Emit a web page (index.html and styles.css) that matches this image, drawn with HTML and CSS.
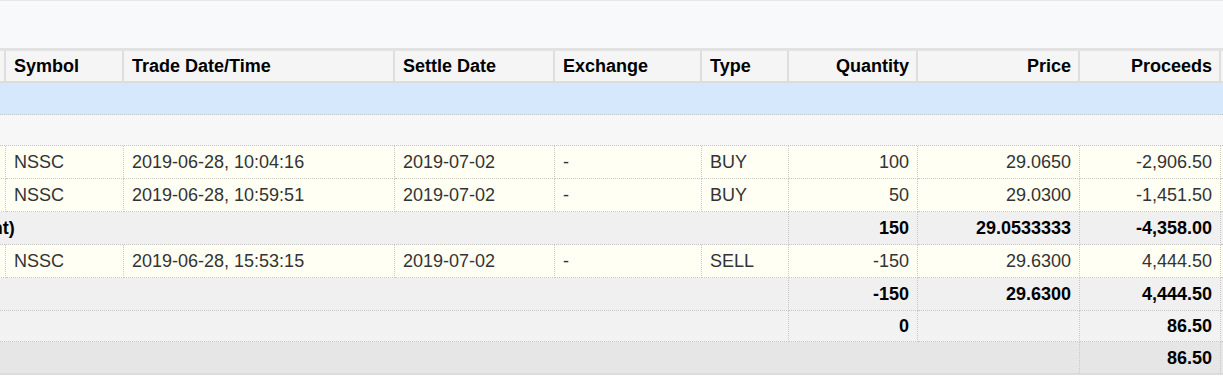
FILE: index.html
```html
<!DOCTYPE html>
<html lang="en">
<head>
<meta charset="utf-8">
<title>Trades</title>
<link rel="stylesheet" href="styles.css">
</head>
<body>
<div class="toolbar"></div>
<div class="scroller">
  <table class="trades">
    <colgroup>
      <col class="c-acct">
      <col class="c-symbol">
      <col class="c-date">
      <col class="c-settle">
      <col class="c-exch">
      <col class="c-type">
      <col class="c-qty">
      <col class="c-price">
      <col class="c-proc">
      <col class="c-extra">
    </colgroup>
    <thead>
      <tr class="head">
        <th></th>
        <th>Symbol</th>
        <th>Trade Date/Time</th>
        <th>Settle Date</th>
        <th>Exchange</th>
        <th>Type</th>
        <th class="num">Quantity</th>
        <th class="num">Price</th>
        <th class="num">Proceeds</th>
        <th></th>
      </tr>
    </thead>
    <tbody>
      <tr class="cat"><td colspan="10"></td></tr>
      <tr class="cur"><td colspan="10"></td></tr>
      <tr class="row">
        <td></td>
        <td>NSSC</td>
        <td>2019-06-28, 10:04:16</td>
        <td>2019-07-02</td>
        <td>-</td>
        <td>BUY</td>
        <td class="num">100</td>
        <td class="num">29.0650</td>
        <td class="num">-2,906.50</td>
        <td></td>
      </tr>
      <tr class="row">
        <td></td>
        <td>NSSC</td>
        <td>2019-06-28, 10:59:51</td>
        <td>2019-07-02</td>
        <td>-</td>
        <td>BUY</td>
        <td class="num">50</td>
        <td class="num">29.0300</td>
        <td class="num">-1,451.50</td>
        <td></td>
      </tr>
      <tr class="sub">
        <td colspan="6" class="label">Total (Amount)</td>
        <td class="num">150</td>
        <td class="num">29.0533333</td>
        <td class="num">-4,358.00</td>
        <td></td>
      </tr>
      <tr class="row">
        <td></td>
        <td>NSSC</td>
        <td>2019-06-28, 15:53:15</td>
        <td>2019-07-02</td>
        <td>-</td>
        <td>SELL</td>
        <td class="num">-150</td>
        <td class="num">29.6300</td>
        <td class="num">4,444.50</td>
        <td></td>
      </tr>
      <tr class="sub">
        <td colspan="6" class="label"></td>
        <td class="num">-150</td>
        <td class="num">29.6300</td>
        <td class="num">4,444.50</td>
        <td></td>
      </tr>
      <tr class="total">
        <td colspan="6" class="label"></td>
        <td class="num">0</td>
        <td class="num"></td>
        <td class="num">86.50</td>
        <td></td>
      </tr>
      <tr class="grand">
        <td colspan="8" class="label"></td>
        <td class="num">86.50</td>
        <td></td>
      </tr>
    </tbody>
  </table>
</div>
</body>
</html>
```

FILE: styles.css
```css
html, body {
  margin: 0;
  padding: 0;
  background: #ffffff;
}

body {
  font-family: "Liberation Sans", Arial, sans-serif;
}

.toolbar {
  height: 47px;
  background: #f8f9fa;
  border-top: 1px solid #e6e7e8;
}

.scroller {
  overflow: hidden;
  border-top: 3px solid #e2e2e2;
  border-bottom: 2px solid #dcdcdc;
}

.trades {
  border-collapse: separate;
  border-spacing: 0;
  table-layout: fixed;
  width: 1493px;
  margin-left: -122px;
  font-size: 18px;
  color: #333333;
}

.c-acct { width: 128px; }
.c-symbol { width: 118px; }
.c-date { width: 271px; }
.c-settle { width: 160px; }
.c-exch { width: 147px; }
.c-type { width: 87px; }
.c-qty { width: 129px; }
.c-price { width: 162px; }
.c-proc { width: 141px; }
.c-extra { width: 150px; }

.trades th,
.trades td {
  box-sizing: border-box;
  padding: 1px 8px 0;
  text-align: left;
  vertical-align: middle;
  white-space: nowrap;
  overflow: hidden;
}

.trades .num {
  text-align: right;
}

.head th {
  height: 32px;
  padding-top: 0;
  background: #f5f5f5;
  color: #000000;
  font-weight: bold;
  border-right: 2px solid #dedede;
  border-bottom: 2px solid #dcdcdc;
}

.head th.num {
  padding-right: 7px;
}

.cat td {
  height: 32px;
  background: #d6e8fb;
  border-bottom: 1px dotted #c4c4c4;
}

.cur td {
  height: 31px;
  background: #f7f7f7;
  border-bottom: 1px dotted #c4c4c4;
}

.row td {
  height: 33px;
  background: #fffff3;
  border-right: 1px dotted #c8c8c8;
  border-bottom: 1px dotted #c8c8c8;
}

.sub td,
.total td,
.grand td {
  color: #000000;
  font-weight: bold;
  border-right: 1px dotted #c8c8c8;
}

.sub td {
  height: 33px;
  background: #f0f0f0;
  border-bottom: 1px dotted #c8c8c8;
}

.total td {
  height: 31px;
  background: #f2f2f2;
  border-bottom: 1px dotted #c8c8c8;
}

.grand td {
  height: 31px;
  background: #e6e6e6;
}

.trades td.label {
  overflow: visible;
  padding-left: 10px;
}
```
